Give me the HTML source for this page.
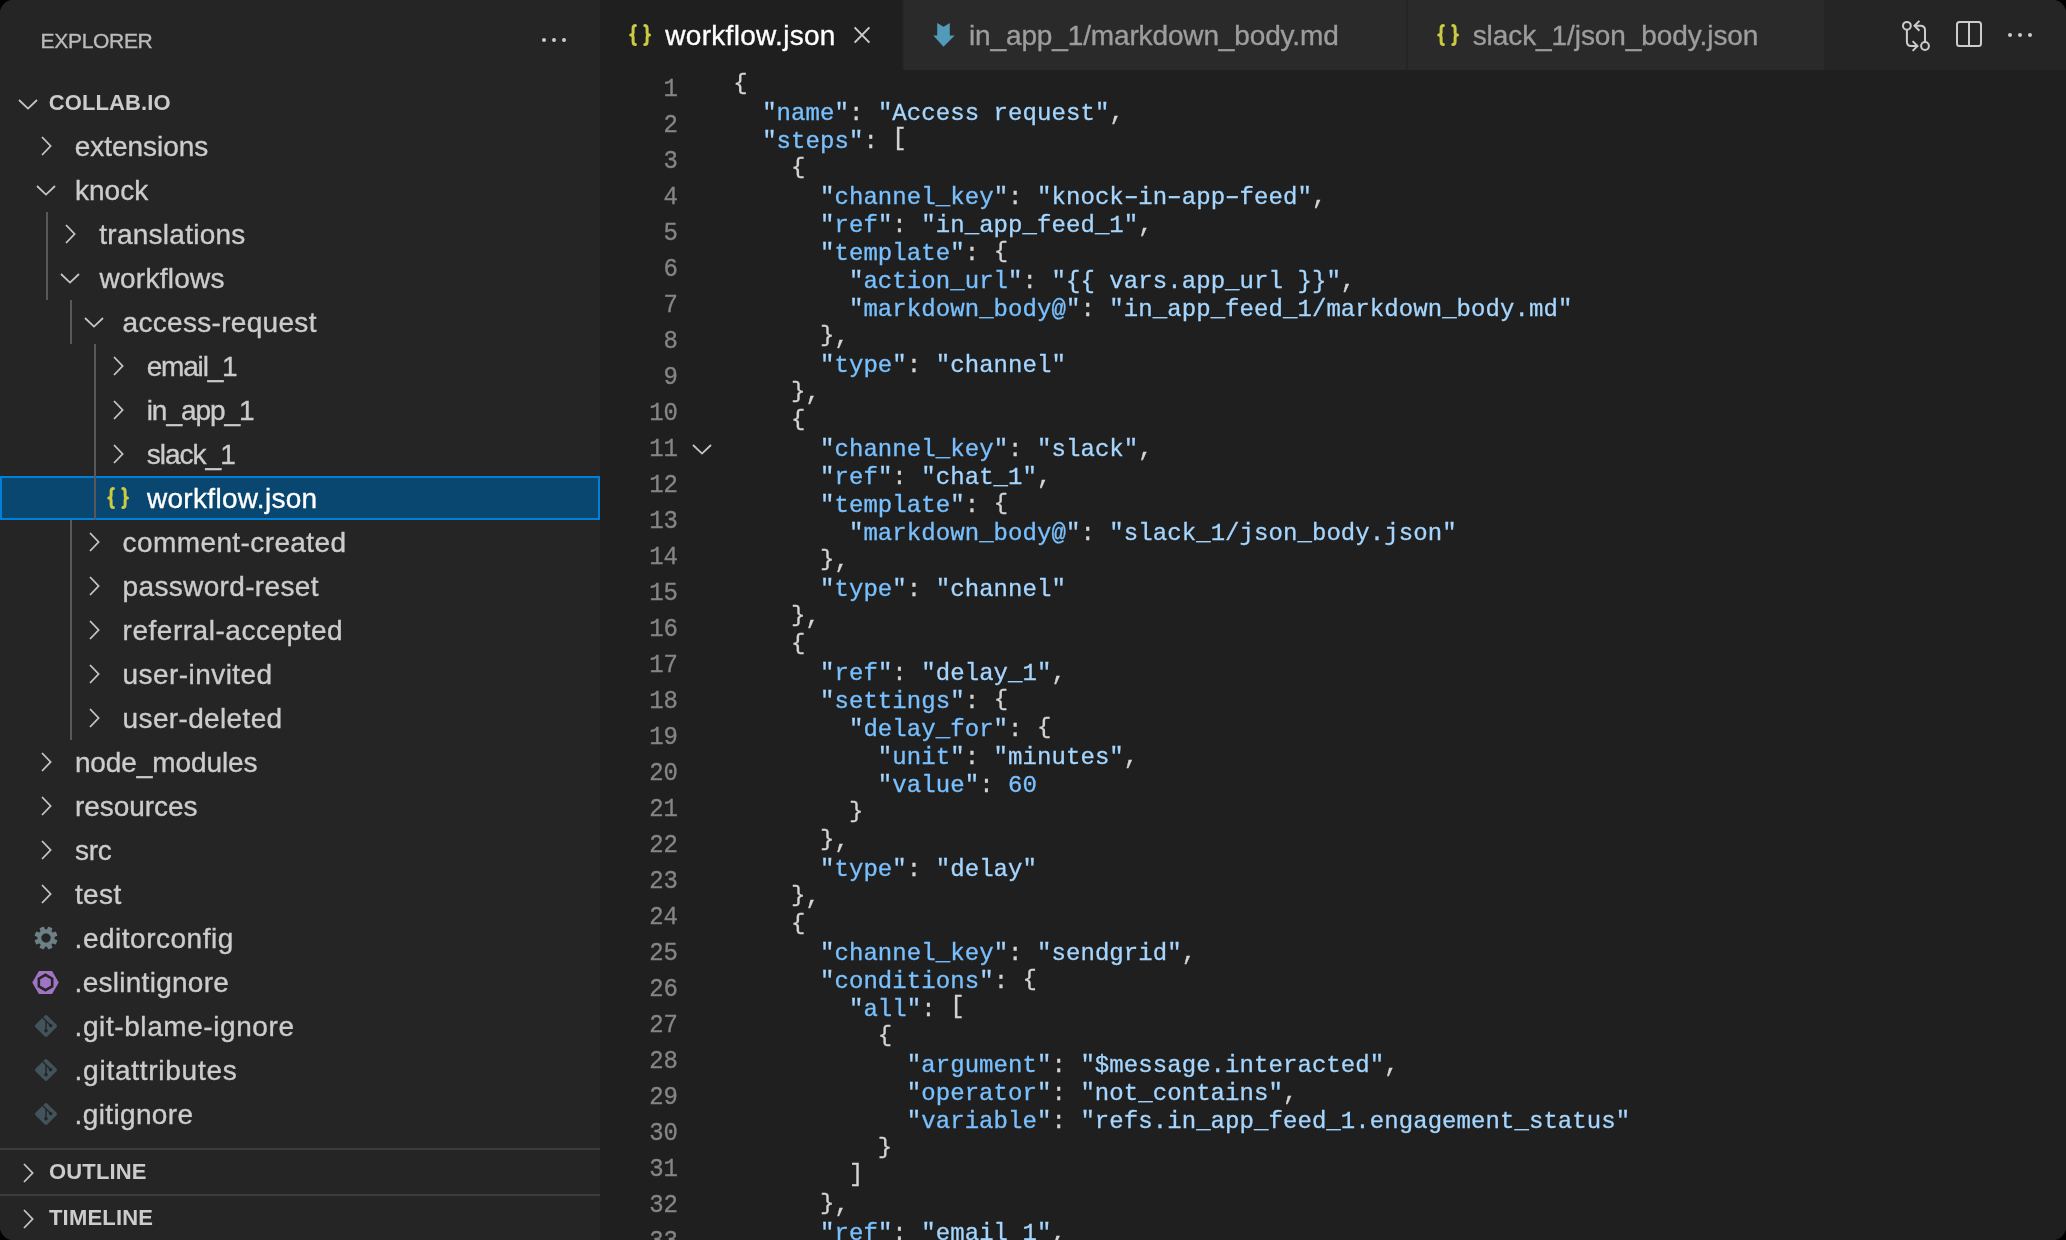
<!DOCTYPE html>
<html><head><meta charset="utf-8"><style>
html,body{margin:0;padding:0;background:#000;}
body{width:2066px;height:1240px;overflow:hidden;position:relative;}
#win{will-change:transform;position:absolute;left:0;top:0;width:2066px;height:1240px;overflow:hidden;clip-path:polygon(0px 10.5px,1.6px 6.8px,3.6px 3.9px,6.6px 1.5px,10.5px 0px,2055.5px 0px,2059.4px 1.5px,2062.4px 3.9px,2064.4px 6.8px,2066px 10.5px,2066px 1229.5px,2064.4px 1233.2px,2062.4px 1236.1px,2059.4px 1238.5px,2055.5px 1240px,10.5px 1240px,6.6px 1238.5px,3.6px 1236.1px,1.6px 1233.2px,0px 1229.5px);background:#1f1f1f;}
.t{position:absolute;white-space:pre;font-family:"Liberation Sans",sans-serif;-webkit-text-stroke:0.35px currentColor;}
.r{position:absolute;}
.i{position:absolute;overflow:visible;}
.c{position:absolute;white-space:pre;font-family:"Liberation Mono",monospace;font-size:24px;line-height:28px;letter-spacing:0.066px;color:#d4d4d4;-webkit-text-stroke:0.3px currentColor;}
.hy{display:inline-block;transform:translateY(-1.4px) scaleX(1.6);}
.br{display:inline-block;transform:translateY(-2.2px) scaleY(0.94);}
.sq{display:inline-block;transform:translateY(-2.5px) scaleY(0.97);}
.ln{position:absolute;left:600px;width:78px;text-align:right;white-space:pre;font-family:"Liberation Mono",monospace;font-size:24px;line-height:28px;color:#858585;-webkit-text-stroke:0.3px currentColor;transform:scaleY(1.11);transform-origin:0 20.39px;}
</style></head><body><div id="win">
<div class="r" style="left:0px;top:0px;width:600px;height:1240px;background:#252526;"></div>
<div class="t" style="left:40.60px;top:30.12px;font-size:21px;line-height:21px;font-weight:400;color:#bbbbbb;letter-spacing:-0.314px;">EXPLORER</div>
<div class="r" style="left:541.9px;top:37.9px;width:4.2px;height:4.2px;border-radius:50%;background:#cccccc"></div>
<div class="r" style="left:551.9px;top:37.9px;width:4.2px;height:4.2px;border-radius:50%;background:#cccccc"></div>
<div class="r" style="left:561.9px;top:37.9px;width:4.2px;height:4.2px;border-radius:50%;background:#cccccc"></div>
<div class="r" style="left:0px;top:476px;width:600px;height:44px;background:#094771;box-sizing:border-box;border:2px solid #0080d8;"></div>
<div class="r" style="left:46px;top:212px;width:2px;height:88px;background:#585858;"></div>
<div class="r" style="left:70px;top:300px;width:2px;height:44px;background:#585858;"></div>
<div class="r" style="left:70px;top:520px;width:2px;height:220px;background:#585858;"></div>
<div class="r" style="left:94px;top:344px;width:2px;height:176px;background:#585858;"></div>
<svg class="i" style="left:16.0px;top:96.7px" width="24" height="14.6"><path d="M3 3 L12.0 11.6 L21 3" fill="none" stroke="#c5c5c5" stroke-width="1.8" stroke-linecap="butt" stroke-linejoin="miter"/></svg>
<div class="t" style="left:48.80px;top:91.78px;font-size:22px;line-height:22px;font-weight:700;color:#cccccc;letter-spacing:0.088px;-webkit-text-stroke:0;">COLLAB.IO</div>
<svg class="i" style="left:39.4px;top:134.0px" width="14.6" height="24"><path d="M3 3 L11.6 12.0 L3 21" fill="none" stroke="#c5c5c5" stroke-width="1.8" stroke-linecap="butt" stroke-linejoin="miter"/></svg>
<div class="t" style="left:74.70px;top:132.70px;font-size:28px;line-height:28px;font-weight:400;color:#cccccc;letter-spacing:-0.022px;">extensions</div>
<svg class="i" style="left:34.0px;top:183.3px" width="24" height="14.6"><path d="M3 3 L12.0 11.6 L21 3" fill="none" stroke="#c5c5c5" stroke-width="1.8" stroke-linecap="butt" stroke-linejoin="miter"/></svg>
<div class="t" style="left:74.90px;top:176.70px;font-size:28px;line-height:28px;font-weight:400;color:#cccccc;letter-spacing:0.075px;">knock</div>
<svg class="i" style="left:63.4px;top:222.0px" width="14.6" height="24"><path d="M3 3 L11.6 12.0 L3 21" fill="none" stroke="#c5c5c5" stroke-width="1.8" stroke-linecap="butt" stroke-linejoin="miter"/></svg>
<div class="t" style="left:99.30px;top:220.70px;font-size:28px;line-height:28px;font-weight:400;color:#cccccc;letter-spacing:0.259px;">translations</div>
<svg class="i" style="left:58.0px;top:271.3px" width="24" height="14.6"><path d="M3 3 L12.0 11.6 L21 3" fill="none" stroke="#c5c5c5" stroke-width="1.8" stroke-linecap="butt" stroke-linejoin="miter"/></svg>
<div class="t" style="left:99.55px;top:264.70px;font-size:28px;line-height:28px;font-weight:400;color:#cccccc;letter-spacing:0.244px;">workflows</div>
<svg class="i" style="left:82.0px;top:315.3px" width="24" height="14.6"><path d="M3 3 L12.0 11.6 L21 3" fill="none" stroke="#c5c5c5" stroke-width="1.8" stroke-linecap="butt" stroke-linejoin="miter"/></svg>
<div class="t" style="left:122.60px;top:308.70px;font-size:28px;line-height:28px;font-weight:400;color:#cccccc;letter-spacing:0.308px;">access-request</div>
<svg class="i" style="left:111.4px;top:354.0px" width="14.6" height="24"><path d="M3 3 L11.6 12.0 L3 21" fill="none" stroke="#c5c5c5" stroke-width="1.8" stroke-linecap="butt" stroke-linejoin="miter"/></svg>
<div class="t" style="left:146.70px;top:352.70px;font-size:28px;line-height:28px;font-weight:400;color:#cccccc;letter-spacing:-1.183px;">email_1</div>
<svg class="i" style="left:111.4px;top:398.0px" width="14.6" height="24"><path d="M3 3 L11.6 12.0 L3 21" fill="none" stroke="#c5c5c5" stroke-width="1.8" stroke-linecap="butt" stroke-linejoin="miter"/></svg>
<div class="t" style="left:146.70px;top:396.70px;font-size:28px;line-height:28px;font-weight:400;color:#cccccc;letter-spacing:-1.036px;">in_app_1</div>
<svg class="i" style="left:111.4px;top:442.0px" width="14.6" height="24"><path d="M3 3 L11.6 12.0 L3 21" fill="none" stroke="#c5c5c5" stroke-width="1.8" stroke-linecap="butt" stroke-linejoin="miter"/></svg>
<div class="t" style="left:146.70px;top:440.70px;font-size:28px;line-height:28px;font-weight:400;color:#cccccc;letter-spacing:-0.983px;">slack_1</div>
<svg class="i" style="left:106.9px;top:487px" width="22" height="22" viewBox="0 0 22 22"><path d="M6.4 1.6 C4.6 1.6 4.1 2.6 4.1 4.6 L4.1 8.4 C4.1 10.2 3.3 11 1.7 11 C3.3 11 4.1 11.8 4.1 13.6 L4.1 17.4 C4.1 19.4 4.6 20.4 6.4 20.4" fill="none" stroke="#cbcb41" stroke-width="3" stroke-linecap="round" stroke-linejoin="round"/><path d="M15.8 1.6 C17.6 1.6 18.1 2.6 18.1 4.6 L18.1 8.4 C18.1 10.2 18.9 11 20.5 11 C18.9 11 18.1 11.8 18.1 13.6 L18.1 17.4 C18.1 19.4 17.6 20.4 15.8 20.4" fill="none" stroke="#cbcb41" stroke-width="3" stroke-linecap="round" stroke-linejoin="round"/></svg>
<div class="t" style="left:146.95px;top:484.70px;font-size:28px;line-height:28px;font-weight:400;color:#ffffff;letter-spacing:0.312px;">workflow.json</div>
<svg class="i" style="left:87.4px;top:530.0px" width="14.6" height="24"><path d="M3 3 L11.6 12.0 L3 21" fill="none" stroke="#c5c5c5" stroke-width="1.8" stroke-linecap="butt" stroke-linejoin="miter"/></svg>
<div class="t" style="left:122.60px;top:528.70px;font-size:28px;line-height:28px;font-weight:400;color:#cccccc;letter-spacing:0.400px;">comment-created</div>
<svg class="i" style="left:87.4px;top:574.0px" width="14.6" height="24"><path d="M3 3 L11.6 12.0 L3 21" fill="none" stroke="#c5c5c5" stroke-width="1.8" stroke-linecap="butt" stroke-linejoin="miter"/></svg>
<div class="t" style="left:122.60px;top:572.70px;font-size:28px;line-height:28px;font-weight:400;color:#cccccc;letter-spacing:0.346px;">password-reset</div>
<svg class="i" style="left:87.4px;top:618.0px" width="14.6" height="24"><path d="M3 3 L11.6 12.0 L3 21" fill="none" stroke="#c5c5c5" stroke-width="1.8" stroke-linecap="butt" stroke-linejoin="miter"/></svg>
<div class="t" style="left:122.60px;top:616.70px;font-size:28px;line-height:28px;font-weight:400;color:#cccccc;letter-spacing:0.522px;">referral-accepted</div>
<svg class="i" style="left:87.4px;top:662.0px" width="14.6" height="24"><path d="M3 3 L11.6 12.0 L3 21" fill="none" stroke="#c5c5c5" stroke-width="1.8" stroke-linecap="butt" stroke-linejoin="miter"/></svg>
<div class="t" style="left:122.60px;top:660.70px;font-size:28px;line-height:28px;font-weight:400;color:#cccccc;letter-spacing:0.432px;">user-invited</div>
<svg class="i" style="left:87.4px;top:706.0px" width="14.6" height="24"><path d="M3 3 L11.6 12.0 L3 21" fill="none" stroke="#c5c5c5" stroke-width="1.8" stroke-linecap="butt" stroke-linejoin="miter"/></svg>
<div class="t" style="left:122.60px;top:704.70px;font-size:28px;line-height:28px;font-weight:400;color:#cccccc;letter-spacing:0.359px;">user-deleted</div>
<svg class="i" style="left:39.4px;top:750.0px" width="14.6" height="24"><path d="M3 3 L11.6 12.0 L3 21" fill="none" stroke="#c5c5c5" stroke-width="1.8" stroke-linecap="butt" stroke-linejoin="miter"/></svg>
<div class="t" style="left:74.90px;top:748.70px;font-size:28px;line-height:28px;font-weight:400;color:#cccccc;letter-spacing:-0.095px;">node_modules</div>
<svg class="i" style="left:39.4px;top:794.0px" width="14.6" height="24"><path d="M3 3 L11.6 12.0 L3 21" fill="none" stroke="#c5c5c5" stroke-width="1.8" stroke-linecap="butt" stroke-linejoin="miter"/></svg>
<div class="t" style="left:74.90px;top:792.70px;font-size:28px;line-height:28px;font-weight:400;color:#cccccc;letter-spacing:-0.050px;">resources</div>
<svg class="i" style="left:39.4px;top:838.0px" width="14.6" height="24"><path d="M3 3 L11.6 12.0 L3 21" fill="none" stroke="#c5c5c5" stroke-width="1.8" stroke-linecap="butt" stroke-linejoin="miter"/></svg>
<div class="t" style="left:74.90px;top:836.70px;font-size:28px;line-height:28px;font-weight:400;color:#cccccc;letter-spacing:-0.175px;">src</div>
<svg class="i" style="left:39.4px;top:882.0px" width="14.6" height="24"><path d="M3 3 L11.6 12.0 L3 21" fill="none" stroke="#c5c5c5" stroke-width="1.8" stroke-linecap="butt" stroke-linejoin="miter"/></svg>
<div class="t" style="left:74.90px;top:880.70px;font-size:28px;line-height:28px;font-weight:400;color:#cccccc;letter-spacing:0.417px;">test</div>
<svg class="i" style="left:32.9px;top:924.7px" width="26" height="26" viewBox="0 0 26 26"><g transform="translate(13 13) rotate(22.5)"><rect x="-2.4" y="-11.5" width="4.8" height="6" rx="0.8" transform="rotate(0)" fill="#6d8086"/><rect x="-2.4" y="-11.5" width="4.8" height="6" rx="0.8" transform="rotate(45)" fill="#6d8086"/><rect x="-2.4" y="-11.5" width="4.8" height="6" rx="0.8" transform="rotate(90)" fill="#6d8086"/><rect x="-2.4" y="-11.5" width="4.8" height="6" rx="0.8" transform="rotate(135)" fill="#6d8086"/><rect x="-2.4" y="-11.5" width="4.8" height="6" rx="0.8" transform="rotate(180)" fill="#6d8086"/><rect x="-2.4" y="-11.5" width="4.8" height="6" rx="0.8" transform="rotate(225)" fill="#6d8086"/><rect x="-2.4" y="-11.5" width="4.8" height="6" rx="0.8" transform="rotate(270)" fill="#6d8086"/><rect x="-2.4" y="-11.5" width="4.8" height="6" rx="0.8" transform="rotate(315)" fill="#6d8086"/><circle r="8.6" fill="#6d8086"/><circle r="4.7" fill="#252526"/></g></svg>
<div class="t" style="left:74.60px;top:924.70px;font-size:28px;line-height:28px;font-weight:400;color:#cccccc;letter-spacing:0.508px;">.editorconfig</div>
<svg class="i" style="left:32.4px;top:969.0px" width="27" height="27" viewBox="0 0 27 27"><polygon points="26.75,13.50 20.12,24.97 6.88,24.97 0.25,13.50 6.87,2.03 20.12,2.03" fill="#a074c4"/><polygon points="20.17,17.35 13.50,21.20 6.83,17.35 6.83,9.65 13.50,5.80 20.17,9.65" fill="#a074c4" stroke="#252526" stroke-width="2.6"/></svg>
<div class="t" style="left:74.60px;top:968.70px;font-size:28px;line-height:28px;font-weight:400;color:#cccccc;letter-spacing:0.275px;">.eslintignore</div>
<svg class="i" style="left:33.8px;top:1013.8px" width="24" height="24" viewBox="0 0 24 24"><rect x="3.7" y="3.7" width="16.6" height="16.6" rx="2" transform="rotate(45 12 12)" fill="#41535b"/><path d="M8.6 3.6 L16.6 11.6 M12 7 L12 16.8" stroke="#252526" stroke-width="1.4" fill="none"/><circle cx="16.6" cy="11.6" r="1.8" fill="#252526"/><circle cx="12" cy="16.8" r="1.8" fill="#252526"/></svg>
<div class="t" style="left:74.60px;top:1012.70px;font-size:28px;line-height:28px;font-weight:400;color:#cccccc;letter-spacing:0.581px;">.git-blame-ignore</div>
<svg class="i" style="left:33.8px;top:1057.8px" width="24" height="24" viewBox="0 0 24 24"><rect x="3.7" y="3.7" width="16.6" height="16.6" rx="2" transform="rotate(45 12 12)" fill="#41535b"/><path d="M8.6 3.6 L16.6 11.6 M12 7 L12 16.8" stroke="#252526" stroke-width="1.4" fill="none"/><circle cx="16.6" cy="11.6" r="1.8" fill="#252526"/><circle cx="12" cy="16.8" r="1.8" fill="#252526"/></svg>
<div class="t" style="left:74.60px;top:1056.70px;font-size:28px;line-height:28px;font-weight:400;color:#cccccc;letter-spacing:0.738px;">.gitattributes</div>
<svg class="i" style="left:33.8px;top:1101.8px" width="24" height="24" viewBox="0 0 24 24"><rect x="3.7" y="3.7" width="16.6" height="16.6" rx="2" transform="rotate(45 12 12)" fill="#41535b"/><path d="M8.6 3.6 L16.6 11.6 M12 7 L12 16.8" stroke="#252526" stroke-width="1.4" fill="none"/><circle cx="16.6" cy="11.6" r="1.8" fill="#252526"/><circle cx="12" cy="16.8" r="1.8" fill="#252526"/></svg>
<div class="t" style="left:74.60px;top:1100.70px;font-size:28px;line-height:28px;font-weight:400;color:#cccccc;letter-spacing:0.361px;">.gitignore</div>
<div class="r" style="left:0px;top:1148px;width:600px;height:2px;background:#3c3c3c;"></div>
<svg class="i" style="left:20.9px;top:1161.0px" width="14.6" height="24"><path d="M3 3 L11.6 12.0 L3 21" fill="none" stroke="#c5c5c5" stroke-width="1.8" stroke-linecap="butt" stroke-linejoin="miter"/></svg>
<div class="t" style="left:49.00px;top:1161.48px;font-size:22px;line-height:22px;font-weight:700;color:#cccccc;letter-spacing:0.150px;-webkit-text-stroke:0;">OUTLINE</div>
<div class="r" style="left:0px;top:1194px;width:600px;height:2px;background:#3c3c3c;"></div>
<svg class="i" style="left:20.9px;top:1207.0px" width="14.6" height="24"><path d="M3 3 L11.6 12.0 L3 21" fill="none" stroke="#c5c5c5" stroke-width="1.8" stroke-linecap="butt" stroke-linejoin="miter"/></svg>
<div class="t" style="left:49.00px;top:1207.48px;font-size:22px;line-height:22px;font-weight:700;color:#cccccc;letter-spacing:0.179px;-webkit-text-stroke:0;">TIMELINE</div>
<div class="r" style="left:600px;top:0px;width:1466px;height:1240px;background:#1f1f1f;"></div>
<div class="r" style="left:600px;top:0px;width:1466px;height:70px;background:#252526;"></div>
<div class="r" style="left:600px;top:0px;width:302px;height:70px;background:#1f1f1f;"></div>
<div class="r" style="left:902px;top:0px;width:504px;height:70px;background:#2a2a2a;box-sizing:border-box;border-left:2px solid #252526;"></div>
<div class="r" style="left:1406px;top:0px;width:418px;height:70px;background:#2a2a2a;box-sizing:border-box;border-left:2px solid #252526;"></div>
<div class="t" style="left:665.25px;top:22.30px;font-size:28px;line-height:28px;font-weight:400;color:#ffffff;letter-spacing:0.304px;">workflow.json</div>
<svg class="i" style="left:628.9px;top:24px" width="22" height="22" viewBox="0 0 22 22"><path d="M6.4 1.6 C4.6 1.6 4.1 2.6 4.1 4.6 L4.1 8.4 C4.1 10.2 3.3 11 1.7 11 C3.3 11 4.1 11.8 4.1 13.6 L4.1 17.4 C4.1 19.4 4.6 20.4 6.4 20.4" fill="none" stroke="#cbcb41" stroke-width="3" stroke-linecap="round" stroke-linejoin="round"/><path d="M15.8 1.6 C17.6 1.6 18.1 2.6 18.1 4.6 L18.1 8.4 C18.1 10.2 18.9 11 20.5 11 C18.9 11 18.1 11.8 18.1 13.6 L18.1 17.4 C18.1 19.4 17.6 20.4 15.8 20.4" fill="none" stroke="#cbcb41" stroke-width="3" stroke-linecap="round" stroke-linejoin="round"/></svg>
<svg class="i" style="left:852px;top:25px" width="20" height="20" viewBox="0 0 20 20"><path d="M2.6 2.4 L17.4 17.6 M17.4 2.4 L2.6 17.6" stroke="#cccccc" stroke-width="2" fill="none"/></svg>
<svg class="i" style="left:930px;top:22px" width="24" height="26" viewBox="0 0 24 26"><path d="M7.2 1.1 L13.6 4.8 L19.8 1.1 L19.8 13.5 L24.7 13.5 L13.5 24.7 L3.3 13.5 L7.2 13.5 Z" fill="#519aba"/></svg>
<svg class="i" style="left:1437px;top:24px" width="22" height="22" viewBox="0 0 22 22"><path d="M6.4 1.6 C4.6 1.6 4.1 2.6 4.1 4.6 L4.1 8.4 C4.1 10.2 3.3 11 1.7 11 C3.3 11 4.1 11.8 4.1 13.6 L4.1 17.4 C4.1 19.4 4.6 20.4 6.4 20.4" fill="none" stroke="#cbcb41" stroke-width="3" stroke-linecap="round" stroke-linejoin="round"/><path d="M15.8 1.6 C17.6 1.6 18.1 2.6 18.1 4.6 L18.1 8.4 C18.1 10.2 18.9 11 20.5 11 C18.9 11 18.1 11.8 18.1 13.6 L18.1 17.4 C18.1 19.4 17.6 20.4 15.8 20.4" fill="none" stroke="#cbcb41" stroke-width="3" stroke-linecap="round" stroke-linejoin="round"/></svg>
<svg class="i" style="left:1895px;top:15px" width="40" height="42" viewBox="0 0 40 42"><g fill="none" stroke="#cccccc" stroke-width="2"><circle cx="11.9" cy="10.8" r="3.9"/><path d="M11.9 14.7 L11.9 26.5 Q11.9 31 16.4 31 L22.3 31"/><path d="M17.6 26.1 L22.5 31 L17.6 35.9"/><circle cx="30" cy="31" r="3.9"/><path d="M30 27.1 L30 15.3 Q30 10.8 25.5 10.8 L19.6 10.8"/><path d="M24.4 5.9 L19.5 10.8 L24.4 15.7"/></g></svg>
<svg class="i" style="left:1950px;top:15px" width="40" height="40" viewBox="0 0 40 40"><g fill="none" stroke="#cccccc" stroke-width="2"><rect x="7" y="7" width="24" height="24" rx="2.5"/><path d="M19 7 L19 31"/></g></svg>
<div class="r" style="left:2007.9px;top:32.9px;width:4.2px;height:4.2px;border-radius:50%;background:#cccccc"></div>
<div class="r" style="left:2017.9px;top:32.9px;width:4.2px;height:4.2px;border-radius:50%;background:#cccccc"></div>
<div class="r" style="left:2027.9px;top:32.9px;width:4.2px;height:4.2px;border-radius:50%;background:#cccccc"></div>
<div class="t" style="left:969.00px;top:22.10px;font-size:28px;line-height:28px;font-weight:400;color:#9d9d9d;letter-spacing:-0.137px;">in_app_1/markdown_body.md</div>
<div class="t" style="left:1472.70px;top:22.10px;font-size:28px;line-height:28px;font-weight:400;color:#9d9d9d;letter-spacing:-0.081px;">slack_1/json_body.json</div>
<div class="c" style="left:733.20px;top:72.21px"><span style="color:#d4d4d4"><span class="br">{</span></span></div>
<div class="c" style="left:762.13px;top:100.21px"><span style="color:#a5d6ff">&quot;</span><span style="color:#79c0ff">name</span><span style="color:#a5d6ff">&quot;</span><span style="color:#d4d4d4">: </span><span style="color:#a5d6ff">&quot;Access request&quot;</span><span style="color:#d4d4d4">,</span></div>
<div class="c" style="left:762.13px;top:128.21px"><span style="color:#a5d6ff">&quot;</span><span style="color:#79c0ff">steps</span><span style="color:#a5d6ff">&quot;</span><span style="color:#d4d4d4">: <span class="sq">[</span></span></div>
<div class="c" style="left:791.06px;top:156.21px"><span style="color:#d4d4d4"><span class="br">{</span></span></div>
<div class="c" style="left:820.00px;top:184.21px"><span style="color:#a5d6ff">&quot;</span><span style="color:#79c0ff">channel_key</span><span style="color:#a5d6ff">&quot;</span><span style="color:#d4d4d4">: </span><span style="color:#a5d6ff">&quot;knock<span class="hy">-</span>in<span class="hy">-</span>app<span class="hy">-</span>feed&quot;</span><span style="color:#d4d4d4">,</span></div>
<div class="c" style="left:820.00px;top:212.21px"><span style="color:#a5d6ff">&quot;</span><span style="color:#79c0ff">ref</span><span style="color:#a5d6ff">&quot;</span><span style="color:#d4d4d4">: </span><span style="color:#a5d6ff">&quot;in_app_feed_1&quot;</span><span style="color:#d4d4d4">,</span></div>
<div class="c" style="left:820.00px;top:240.21px"><span style="color:#a5d6ff">&quot;</span><span style="color:#79c0ff">template</span><span style="color:#a5d6ff">&quot;</span><span style="color:#d4d4d4">: <span class="br">{</span></span></div>
<div class="c" style="left:848.93px;top:268.21px"><span style="color:#a5d6ff">&quot;</span><span style="color:#79c0ff">action_url</span><span style="color:#a5d6ff">&quot;</span><span style="color:#d4d4d4">: </span><span style="color:#a5d6ff">&quot;{{ vars.app_url }}&quot;</span><span style="color:#d4d4d4">,</span></div>
<div class="c" style="left:848.93px;top:296.21px"><span style="color:#a5d6ff">&quot;</span><span style="color:#79c0ff">markdown_body@</span><span style="color:#a5d6ff">&quot;</span><span style="color:#d4d4d4">: </span><span style="color:#a5d6ff">&quot;in_app_feed_1/markdown_body.md&quot;</span></div>
<div class="c" style="left:820.00px;top:324.21px"><span style="color:#d4d4d4"><span class="br">}</span>,</span></div>
<div class="c" style="left:820.00px;top:352.21px"><span style="color:#a5d6ff">&quot;</span><span style="color:#79c0ff">type</span><span style="color:#a5d6ff">&quot;</span><span style="color:#d4d4d4">: </span><span style="color:#a5d6ff">&quot;channel&quot;</span></div>
<div class="c" style="left:791.06px;top:380.21px"><span style="color:#d4d4d4"><span class="br">}</span>,</span></div>
<div class="c" style="left:791.06px;top:408.21px"><span style="color:#d4d4d4"><span class="br">{</span></span></div>
<div class="c" style="left:820.00px;top:436.21px"><span style="color:#a5d6ff">&quot;</span><span style="color:#79c0ff">channel_key</span><span style="color:#a5d6ff">&quot;</span><span style="color:#d4d4d4">: </span><span style="color:#a5d6ff">&quot;slack&quot;</span><span style="color:#d4d4d4">,</span></div>
<div class="c" style="left:820.00px;top:464.21px"><span style="color:#a5d6ff">&quot;</span><span style="color:#79c0ff">ref</span><span style="color:#a5d6ff">&quot;</span><span style="color:#d4d4d4">: </span><span style="color:#a5d6ff">&quot;chat_1&quot;</span><span style="color:#d4d4d4">,</span></div>
<div class="c" style="left:820.00px;top:492.21px"><span style="color:#a5d6ff">&quot;</span><span style="color:#79c0ff">template</span><span style="color:#a5d6ff">&quot;</span><span style="color:#d4d4d4">: <span class="br">{</span></span></div>
<div class="c" style="left:848.93px;top:520.21px"><span style="color:#a5d6ff">&quot;</span><span style="color:#79c0ff">markdown_body@</span><span style="color:#a5d6ff">&quot;</span><span style="color:#d4d4d4">: </span><span style="color:#a5d6ff">&quot;slack_1/json_body.json&quot;</span></div>
<div class="c" style="left:820.00px;top:548.21px"><span style="color:#d4d4d4"><span class="br">}</span>,</span></div>
<div class="c" style="left:820.00px;top:576.21px"><span style="color:#a5d6ff">&quot;</span><span style="color:#79c0ff">type</span><span style="color:#a5d6ff">&quot;</span><span style="color:#d4d4d4">: </span><span style="color:#a5d6ff">&quot;channel&quot;</span></div>
<div class="c" style="left:791.06px;top:604.21px"><span style="color:#d4d4d4"><span class="br">}</span>,</span></div>
<div class="c" style="left:791.06px;top:632.21px"><span style="color:#d4d4d4"><span class="br">{</span></span></div>
<div class="c" style="left:820.00px;top:660.21px"><span style="color:#a5d6ff">&quot;</span><span style="color:#79c0ff">ref</span><span style="color:#a5d6ff">&quot;</span><span style="color:#d4d4d4">: </span><span style="color:#a5d6ff">&quot;delay_1&quot;</span><span style="color:#d4d4d4">,</span></div>
<div class="c" style="left:820.00px;top:688.21px"><span style="color:#a5d6ff">&quot;</span><span style="color:#79c0ff">settings</span><span style="color:#a5d6ff">&quot;</span><span style="color:#d4d4d4">: <span class="br">{</span></span></div>
<div class="c" style="left:848.93px;top:716.21px"><span style="color:#a5d6ff">&quot;</span><span style="color:#79c0ff">delay_for</span><span style="color:#a5d6ff">&quot;</span><span style="color:#d4d4d4">: <span class="br">{</span></span></div>
<div class="c" style="left:877.86px;top:744.21px"><span style="color:#a5d6ff">&quot;</span><span style="color:#79c0ff">unit</span><span style="color:#a5d6ff">&quot;</span><span style="color:#d4d4d4">: </span><span style="color:#a5d6ff">&quot;minutes&quot;</span><span style="color:#d4d4d4">,</span></div>
<div class="c" style="left:877.86px;top:772.21px"><span style="color:#a5d6ff">&quot;</span><span style="color:#79c0ff">value</span><span style="color:#a5d6ff">&quot;</span><span style="color:#d4d4d4">: </span><span style="color:#79c0ff">60</span></div>
<div class="c" style="left:848.93px;top:800.21px"><span style="color:#d4d4d4"><span class="br">}</span></span></div>
<div class="c" style="left:820.00px;top:828.21px"><span style="color:#d4d4d4"><span class="br">}</span>,</span></div>
<div class="c" style="left:820.00px;top:856.21px"><span style="color:#a5d6ff">&quot;</span><span style="color:#79c0ff">type</span><span style="color:#a5d6ff">&quot;</span><span style="color:#d4d4d4">: </span><span style="color:#a5d6ff">&quot;delay&quot;</span></div>
<div class="c" style="left:791.06px;top:884.21px"><span style="color:#d4d4d4"><span class="br">}</span>,</span></div>
<div class="c" style="left:791.06px;top:912.21px"><span style="color:#d4d4d4"><span class="br">{</span></span></div>
<div class="c" style="left:820.00px;top:940.21px"><span style="color:#a5d6ff">&quot;</span><span style="color:#79c0ff">channel_key</span><span style="color:#a5d6ff">&quot;</span><span style="color:#d4d4d4">: </span><span style="color:#a5d6ff">&quot;sendgrid&quot;</span><span style="color:#d4d4d4">,</span></div>
<div class="c" style="left:820.00px;top:968.21px"><span style="color:#a5d6ff">&quot;</span><span style="color:#79c0ff">conditions</span><span style="color:#a5d6ff">&quot;</span><span style="color:#d4d4d4">: <span class="br">{</span></span></div>
<div class="c" style="left:848.93px;top:996.21px"><span style="color:#a5d6ff">&quot;</span><span style="color:#79c0ff">all</span><span style="color:#a5d6ff">&quot;</span><span style="color:#d4d4d4">: <span class="sq">[</span></span></div>
<div class="c" style="left:877.86px;top:1024.21px"><span style="color:#d4d4d4"><span class="br">{</span></span></div>
<div class="c" style="left:906.79px;top:1052.21px"><span style="color:#a5d6ff">&quot;</span><span style="color:#79c0ff">argument</span><span style="color:#a5d6ff">&quot;</span><span style="color:#d4d4d4">: </span><span style="color:#a5d6ff">&quot;$message.interacted&quot;</span><span style="color:#d4d4d4">,</span></div>
<div class="c" style="left:906.79px;top:1080.21px"><span style="color:#a5d6ff">&quot;</span><span style="color:#79c0ff">operator</span><span style="color:#a5d6ff">&quot;</span><span style="color:#d4d4d4">: </span><span style="color:#a5d6ff">&quot;not_contains&quot;</span><span style="color:#d4d4d4">,</span></div>
<div class="c" style="left:906.79px;top:1108.21px"><span style="color:#a5d6ff">&quot;</span><span style="color:#79c0ff">variable</span><span style="color:#a5d6ff">&quot;</span><span style="color:#d4d4d4">: </span><span style="color:#a5d6ff">&quot;refs.in_app_feed_1.engagement_status&quot;</span></div>
<div class="c" style="left:877.86px;top:1136.21px"><span style="color:#d4d4d4"><span class="br">}</span></span></div>
<div class="c" style="left:848.93px;top:1164.21px"><span style="color:#d4d4d4"><span class="sq">]</span></span></div>
<div class="c" style="left:820.00px;top:1192.21px"><span style="color:#d4d4d4"><span class="br">}</span>,</span></div>
<div class="c" style="left:820.00px;top:1220.21px"><span style="color:#a5d6ff">&quot;</span><span style="color:#79c0ff">ref</span><span style="color:#a5d6ff">&quot;</span><span style="color:#d4d4d4">: </span><span style="color:#a5d6ff">&quot;email_1&quot;</span><span style="color:#d4d4d4">,</span></div>
<div class="ln" style="top:75.61px">1</div>
<div class="ln" style="top:111.61px">2</div>
<div class="ln" style="top:147.61px">3</div>
<div class="ln" style="top:183.61px">4</div>
<div class="ln" style="top:219.61px">5</div>
<div class="ln" style="top:255.61px">6</div>
<div class="ln" style="top:291.61px">7</div>
<div class="ln" style="top:327.61px">8</div>
<div class="ln" style="top:363.61px">9</div>
<div class="ln" style="top:399.61px">10</div>
<div class="ln" style="top:435.61px">11</div>
<div class="ln" style="top:471.61px">12</div>
<div class="ln" style="top:507.61px">13</div>
<div class="ln" style="top:543.61px">14</div>
<div class="ln" style="top:579.61px">15</div>
<div class="ln" style="top:615.61px">16</div>
<div class="ln" style="top:651.61px">17</div>
<div class="ln" style="top:687.61px">18</div>
<div class="ln" style="top:723.61px">19</div>
<div class="ln" style="top:759.61px">20</div>
<div class="ln" style="top:795.61px">21</div>
<div class="ln" style="top:831.61px">22</div>
<div class="ln" style="top:867.61px">23</div>
<div class="ln" style="top:903.61px">24</div>
<div class="ln" style="top:939.61px">25</div>
<div class="ln" style="top:975.61px">26</div>
<div class="ln" style="top:1011.61px">27</div>
<div class="ln" style="top:1047.61px">28</div>
<div class="ln" style="top:1083.61px">29</div>
<div class="ln" style="top:1119.61px">30</div>
<div class="ln" style="top:1155.61px">31</div>
<div class="ln" style="top:1191.61px">32</div>
<div class="ln" style="top:1227.61px">33</div>
<svg class="i" style="left:690.0px;top:441.7px" width="24" height="14.6"><path d="M3 3 L12.0 11.6 L21 3" fill="none" stroke="#c5c5c5" stroke-width="1.8" stroke-linecap="butt" stroke-linejoin="miter"/></svg>
</div></body></html>
